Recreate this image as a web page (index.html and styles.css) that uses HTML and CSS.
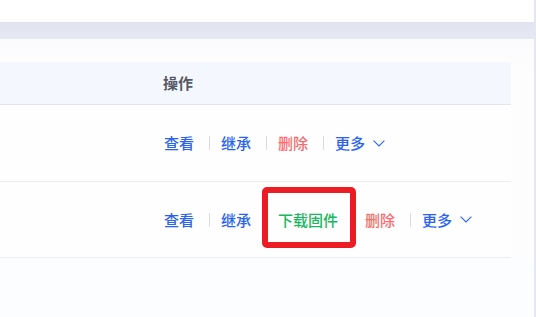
FILE: index.html
```html
<!DOCTYPE html>
<html lang="zh-CN">
<head>
<meta charset="utf-8">
<link rel="stylesheet" href="styles.css">
</head>
<body>
<div class="page">
  <div class="topbar"></div>
  <div class="band"></div>
  <div class="content">
    <div class="table">
      <div class="thead">
        <div class="th">操作</div>
      </div>
      <div class="row row1">
        <div class="actions">
          <a class="link blue">查看</a><span class="sep"></span>
          <a class="link blue">继承</a><span class="sep"></span>
          <a class="link red">删除</a><span class="sep"></span>
          <a class="link blue more">更多<svg class="chev" width="12" height="7" viewBox="0 0 12 7"><path d="M0.6 0.6 L6 5.9 L11.4 0.6" fill="none" stroke="#2a63f0" stroke-width="1.1"/></svg></a>
        </div>
      </div>
      <div class="row row2">
        <div class="actions">
          <a class="link blue">查看</a><span class="sep"></span>
          <a class="link blue">继承</a><span class="sep"></span>
          <a class="link green marked">下载固件</a><span class="sep"></span>
          <a class="link red">删除</a><span class="sep"></span>
          <a class="link blue more">更多<svg class="chev" width="12" height="7" viewBox="0 0 12 7"><path d="M0.6 0.6 L6 5.9 L11.4 0.6" fill="none" stroke="#2a63f0" stroke-width="1.1"/></svg></a>
        </div>
      </div>
    </div>
  </div>
</div>
</body>
</html>
```

FILE: styles.css
```css
html, body {
  margin: 0;
  padding: 0;
  background: #fdfdfe;
}
body {
  font-family: "Noto Sans CJK SC", "Noto Sans", sans-serif;
  font-size: 15px;
}
.page {
  width: 534px;
  height: 317px;
  border-right: 2px solid #e5e7ef;
  background: #fcfdfe;
  overflow: hidden;
}
.topbar {
  height: 22px;
  background: #ffffff;
}
.band {
  height: 17px;
  background: linear-gradient(#e1e4f0, #e6e9f3);
}
.content {
  padding: 23px 23px 0 0;
  background: linear-gradient(#fbfbfd, #fdfdfe 30px);
}
.table {
  width: 511px;
}
.thead {
  height: 43px;
  background: #f4f7fe;
  border-bottom: 1px solid #e3e5ea;
  display: flex;
  align-items: center;
  padding-left: 163px;
  box-sizing: border-box;
}
.th {
  font-weight: 700;
  color: #555a66;
  line-height: 20px;
}
.row {
  display: flex;
  align-items: center;
  padding-left: 164px;
  border-bottom: 1px solid #ecedf1;
  background: #fefeff;
}
.row1 { height: 76px; }
.row2 { height: 75px; }
.actions {
  display: flex;
  align-items: center;
  line-height: 20px;
}
.link {
  cursor: pointer;
  white-space: nowrap;
  font-weight: 500;
}
.blue { color: #2a63f0; }
.red { color: #f46c6c; }
.green { color: #18b85e; }
.sep {
  display: inline-block;
  width: 1px;
  height: 14px;
  background: #d8dbe2;
  margin: 0 11px 0 15px;
}
.more {
  display: inline-flex;
  align-items: center;
}
.chev {
  margin-left: 8px;
}
.marked {
  position: relative;
}
.marked::after {
  content: "";
  position: absolute;
  left: -16px;
  right: -18px;
  top: -23px;
  bottom: -18px;
  border: 6px solid #ec1c25;
  border-radius: 5px;
}
```
